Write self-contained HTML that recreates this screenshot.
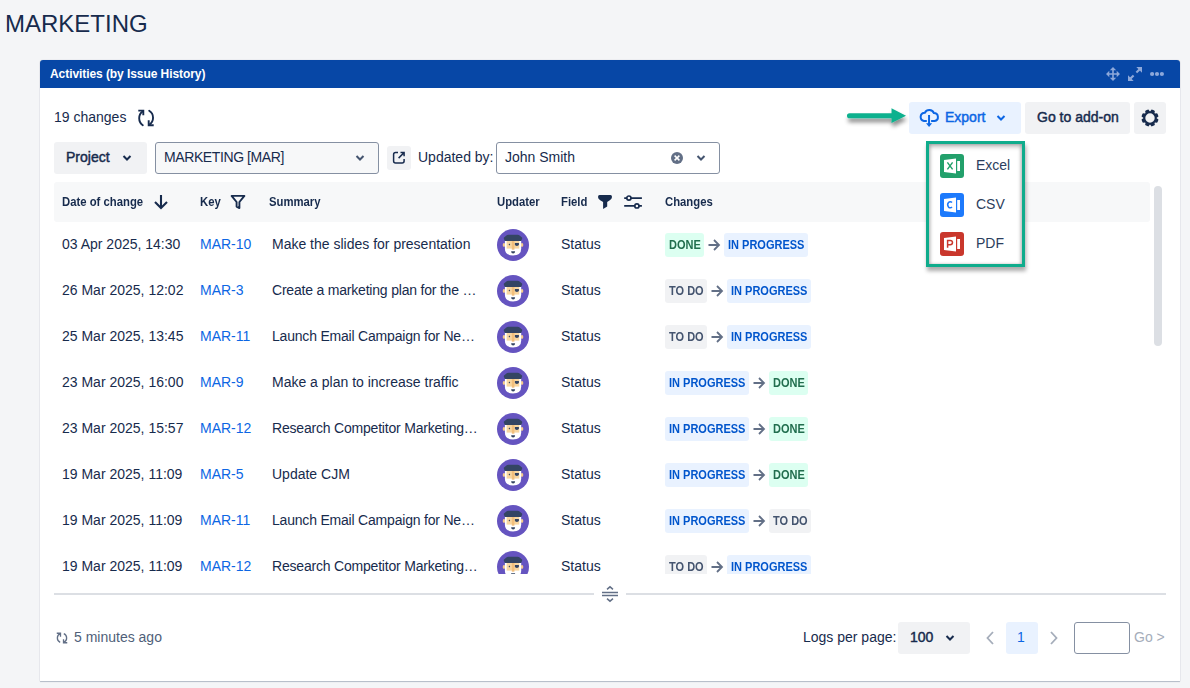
<!DOCTYPE html>
<html><head><meta charset="utf-8">
<style>
*{box-sizing:border-box;margin:0;padding:0}
html,body{width:1190px;height:688px;overflow:hidden;background:#F4F5F7;font-family:"Liberation Sans",sans-serif;color:#172B4D}
.a{position:absolute}
.t{position:absolute;white-space:nowrap;font-size:14px;line-height:16px}
.b{font-weight:bold}
.m{-webkit-text-stroke:0.45px currentColor}
.panel{position:absolute;left:40px;top:60px;width:1140px;height:621px;background:#fff;border-radius:3px 3px 0 0;box-shadow:0 1px 1px rgba(9,30,66,.25),0 0 1px rgba(9,30,66,.31)}
.hdr{position:absolute;left:40px;top:60px;width:1140px;height:28px;background:#0747A6;border-radius:3px 3px 0 0}
.btn{position:absolute;background:#F1F2F4;border-radius:3px}
.th{position:absolute;white-space:nowrap;font-size:12.5px;line-height:16px;top:194px;font-weight:bold;transform:scaleX(.905);transform-origin:0 0}
.bd{position:absolute;height:24px;border-radius:3px;font-size:12.5px;font-weight:bold;line-height:24px;white-space:nowrap;padding-left:4px}
.bd span{display:inline-block;transform:scaleX(.88);transform-origin:0 0}
.done{background:#DCFFF1;color:#216E4E}
.prog{background:#E9F2FF;color:#0055CC}
.todo{background:#F1F2F4;color:#44546F}
svg{position:absolute;overflow:visible}
</style></head><body>
<div class="t" style="left:5px;top:10px;font-size:24px;line-height:28px">MARKETING</div>
<div class="panel"></div><div class="hdr"></div>
<div class="t b" style="left:50px;top:66px;font-size:12px;color:#fff;letter-spacing:-0.07px">Activities (by Issue History)</div>
<svg style="left:1106px;top:67px" width="14" height="14" viewBox="0 0 14 14" fill="#8DA8DA"><path d="M7 1.5V12.5M1.5 7H12.5" stroke="#8DA8DA" stroke-width="1.6"/><path d="M3.8 3.3L7 0L10.2 3.3ZM3.8 10.7L7 14L10.2 10.7ZM3.3 3.8L0 7L3.3 10.2ZM10.7 3.8L14 7L10.7 10.2Z"/></svg>
<svg style="left:1128px;top:67px" width="14" height="14" viewBox="0 0 14 14" fill="#8DA8DA"><path d="M8.3 0H14V5.7ZM0 8.3V14H5.7Z"/><path d="M11.5 2.5L8.4 5.6M2.5 11.5L5.6 8.4" stroke="#8DA8DA" stroke-width="2.1"/></svg>
<svg style="left:1150px;top:72px" width="14" height="4" viewBox="0 0 14 4" fill="#8DA8DA"><circle cx="2.1" cy="2" r="2.1"/><circle cx="7" cy="2" r="2.1"/><circle cx="11.9" cy="2" r="2.1"/></svg>
<div class="t" style="left:54px;top:109px">19 changes</div>
<svg style="left:134px;top:106px" width="24" height="24" viewBox="0 0 24 24" fill="none" stroke="#172B4D" stroke-width="1.9"><path d="M4.3 4.6H9.3V9.3"/><path d="M8.8 5.3A8.5 8.5 0 0 0 8.8 19.2M15.2 4.8A8.2 8.2 0 0 1 15.2 18.7" stroke-linecap="round"/><path d="M14.7 14.3V19.3H19.7"/></svg>
<svg style="left:840px;top:100px" width="70" height="30" viewBox="0 0 70 30">
<defs><filter id="sh" x="-30%" y="-80%" width="160%" height="260%"><feDropShadow dx="1" dy="4" stdDeviation="2.2" flood-color="#000" flood-opacity=".45"/></filter></defs>
<g filter="url(#sh)"><path d="M9.5 13.2H51.5V8.2L66 15.7L51.5 23V18.3H9.5A2.55 2.55 0 0 1 9.5 13.2Z" fill="#0FB18E"/></g></svg>
<div class="btn" style="left:909px;top:102px;width:112px;height:32px;background:#E9F2FF"></div>
<svg style="left:914px;top:104px" width="30" height="28" viewBox="0 0 30 28" fill="none" stroke="#0C66E4" stroke-width="2"><path d="M12.8 17H9.9A4.2 4.2 0 0 1 10.86 8.71A5 5 0 0 1 19.91 9.06A4 4 0 0 1 20.6 17H17.1"/><path d="M15.05 11V20"/><path d="M12 19.3H18.1L15.05 23Z" fill="#0C66E4" stroke="none"/></svg>
<div class="t m" style="left:945px;top:109px;color:#0C66E4">Export</div>
<svg style="left:996px;top:114px" width="10" height="8" viewBox="0 0 10 8" fill="none" stroke="#0C66E4" stroke-width="2"><path d="M1.5 2L5 5.5L8.5 2"/></svg>
<div class="btn" style="left:1025px;top:102px;width:105px;height:32px"></div>
<div class="t m" style="left:1037px;top:109px">Go to add-on</div>
<div class="btn" style="left:1134px;top:102px;width:32px;height:32px"></div>
<svg style="left:1139.7px;top:107.5px" width="20" height="20" viewBox="0 0 20 20"><path fill="#172B4D" fill-rule="evenodd" d="M16.69 10.33L18.46 11.57A8.6 8.6 0 0 1 17.09 14.87L14.97 14.50A6.7 6.7 0 0 1 14.50 14.97L14.87 17.09A8.6 8.6 0 0 1 11.57 18.46L10.33 16.69A6.7 6.7 0 0 1 9.67 16.69L8.43 18.46A8.6 8.6 0 0 1 5.13 17.09L5.50 14.97A6.7 6.7 0 0 1 5.03 14.50L2.91 14.87A8.6 8.6 0 0 1 1.54 11.57L3.31 10.33A6.7 6.7 0 0 1 3.31 9.67L1.54 8.43A8.6 8.6 0 0 1 2.91 5.13L5.03 5.50A6.7 6.7 0 0 1 5.50 5.03L5.13 2.91A8.6 8.6 0 0 1 8.43 1.54L9.67 3.31A6.7 6.7 0 0 1 10.33 3.31L11.57 1.54A8.6 8.6 0 0 1 14.87 2.91L14.50 5.03A6.7 6.7 0 0 1 14.97 5.50L17.09 5.13A8.6 8.6 0 0 1 18.46 8.43L16.69 9.67A6.7 6.7 0 0 1 16.69 10.33ZM10 5.3A4.7 4.7 0 1 0 10 14.7A4.7 4.7 0 1 0 10 5.3Z"/></svg>
<div class="btn" style="left:54px;top:142px;width:93px;height:32px"></div>
<div class="t m" style="left:66px;top:149px">Project</div>
<svg style="left:122px;top:154px" width="10" height="8" viewBox="0 0 10 8" fill="none" stroke="#172B4D" stroke-width="2"><path d="M1.5 2L5 5.5L8.5 2"/></svg>
<div class="a" style="left:155px;top:142px;width:224px;height:32px;border:1px solid #8590A2;border-radius:3px;background:#F7F8F9"></div>
<div class="t" style="left:164px;top:149px;letter-spacing:-0.4px">MARKETING [MAR]</div>
<svg style="left:355px;top:154px" width="10" height="8" viewBox="0 0 10 8" fill="none" stroke="#44546F" stroke-width="2"><path d="M1.5 2L5 5.5L8.5 2"/></svg>
<div class="btn" style="left:387px;top:146px;width:24px;height:24px"></div>
<svg style="left:384px;top:143px" width="30" height="30" viewBox="0 0 30 30" fill="none" stroke="#172B4D" stroke-width="1.5"><path d="M14 9.6H11.6A2 2 0 0 0 9.6 11.6V18.1A2 2 0 0 0 11.6 20.1H18.1A2 2 0 0 0 20.1 18.1V16M16.5 9.6H20.1V13.2M19.9 9.8L14.6 15.1"/></svg>
<div class="t" style="left:418px;top:149px">Updated by:</div>
<div class="a" style="left:496px;top:142px;width:224px;height:32px;border:1px solid #8590A2;border-radius:3px;background:#fff"></div>
<div class="t" style="left:505px;top:149px">John Smith</div>
<svg style="left:671px;top:152px" width="12" height="12" viewBox="0 0 12 12"><circle cx="6" cy="6" r="6" fill="#626F86"/><path d="M3.6 3.6L8.4 8.4M8.4 3.6L3.6 8.4" stroke="#fff" stroke-width="1.5"/></svg>
<svg style="left:696px;top:154px" width="10" height="8" viewBox="0 0 10 8" fill="none" stroke="#44546F" stroke-width="2"><path d="M1.5 2L5 5.5L8.5 2"/></svg>
<div class="a" style="left:54px;top:182px;width:1096px;height:40px;background:#F7F8F9;border-radius:3px"></div>
<div class="th" style="left:62px">Date of change</div>
<div class="th" style="left:200px">Key</div>
<div class="th" style="left:269px">Summary</div>
<div class="th" style="left:497px">Updater</div>
<div class="th" style="left:561px">Field</div>
<div class="th" style="left:665px">Changes</div>
<svg style="left:154px;top:195px" width="14" height="14" viewBox="0 0 14 14" fill="none" stroke="#172B4D" stroke-width="2.1"><path d="M7 0V13M1 7L7 13L13 7"/></svg>
<svg style="left:230px;top:194px" width="16" height="16" viewBox="0 0 16 16" fill="none" stroke="#172B4D" stroke-width="1.9" stroke-linejoin="round"><path d="M1.6 1.9H14.4L9.4 8V14.1L6.6 12.6V8Z"/><path d="M7.6 8.6V12.2L8.4 12.6V8.6Z" fill="#8590A2" stroke="none"/></svg>
<svg style="left:598px;top:195px" width="14" height="14" viewBox="0 0 14 14"><path fill="#172B4D" d="M1.5 0H12.5Q14 0 14 2Q14 3.8 11.8 5.3L9.2 7.1V11.6L5.1 13.9V7.1L2.2 5.3Q0 3.8 0 2Q0 0 1.5 0Z"/></svg>
<svg style="left:623px;top:194px" width="20" height="16" viewBox="0 0 20 16" fill="none" stroke="#172B4D" stroke-width="1.7"><path d="M1.2 4.1H3.8M8 4.1H18.9M1.2 11.9H11.8M16 11.9H18.9"/><circle cx="5.9" cy="4.1" r="2.1"/><circle cx="13.9" cy="11.9" r="2.1"/></svg>
<div class="a" style="left:54px;top:222px;width:1096px;height:352px;overflow:hidden">
<div class="t" style="left:8px;top:14px">03 Apr 2025, 14:30</div>
<div class="t" style="left:146px;top:14px;color:#0C66E4">MAR-10</div>
<div class="t" style="left:218px;top:14px">Make the slides for presentation</div>
<svg style="left:443px;top:7px" width="32" height="32" viewBox="0 0 32 32">
<circle cx="16" cy="16" r="16" fill="#6554C0"/>
<ellipse cx="7" cy="15.9" rx="1.3" ry="1.9" fill="#F5C98A"/><ellipse cx="25" cy="15.9" rx="1.3" ry="1.9" fill="#F5C98A"/>
<path d="M7.9 11.5H24.2V19.5Q24.2 26.4 16 26.4Q7.9 26.4 7.9 19.5Z" fill="#fff"/>
<path d="M9.6 11.5H22.3V19.6H9.6Z" fill="#F8D6A0"/>
<path d="M14.8 11.5H17.4V20.7H14.8Z" fill="#F2BF7D"/>
<path d="M11.7 5.8H20.3Q22 5.8 23.5 7.2L25 8.6Q25.5 9.3 24.8 10.5L24.2 11.9H7.8L7.2 10.5Q6.5 9.3 7 8.6L8.5 7.2Q10 5.8 11.7 5.8Z" fill="#344563"/>
<path d="M12.4 14.6L13.2 15.5L12.4 16.4L11.6 15.5Z" fill="#344563"/>
<path d="M17.9 14H21.9V15.2A2 1.7 0 0 1 17.9 15.2Z" fill="#344563"/>
<path d="M14.1 22.3H18.1Q18.1 24.5 16.1 24.5Q14.1 24.5 14.1 22.3Z" fill="#344563"/>
</svg>
<div class="t" style="left:507px;top:14px">Status</div>
<div class="bd done" style="left:611px;top:11px;width:39px"><span>DONE</span></div>
<svg style="left:654px;top:17px" width="12" height="12" viewBox="0 0 12 12" fill="none" stroke="#626F86" stroke-width="1.8"><path d="M0.5 6H11M6 1L11 6L6 11"/></svg>
<div class="bd prog" style="left:670px;top:11px;width:84px"><span>IN PROGRESS</span></div>
<div class="t" style="left:8px;top:60px">26 Mar 2025, 12:02</div>
<div class="t" style="left:146px;top:60px;color:#0C66E4">MAR-3</div>
<div class="t" style="left:218px;top:60px;letter-spacing:-0.2px">Create a marketing plan for the …</div>
<svg style="left:443px;top:53px" width="32" height="32" viewBox="0 0 32 32">
<circle cx="16" cy="16" r="16" fill="#6554C0"/>
<ellipse cx="7" cy="15.9" rx="1.3" ry="1.9" fill="#F5C98A"/><ellipse cx="25" cy="15.9" rx="1.3" ry="1.9" fill="#F5C98A"/>
<path d="M7.9 11.5H24.2V19.5Q24.2 26.4 16 26.4Q7.9 26.4 7.9 19.5Z" fill="#fff"/>
<path d="M9.6 11.5H22.3V19.6H9.6Z" fill="#F8D6A0"/>
<path d="M14.8 11.5H17.4V20.7H14.8Z" fill="#F2BF7D"/>
<path d="M11.7 5.8H20.3Q22 5.8 23.5 7.2L25 8.6Q25.5 9.3 24.8 10.5L24.2 11.9H7.8L7.2 10.5Q6.5 9.3 7 8.6L8.5 7.2Q10 5.8 11.7 5.8Z" fill="#344563"/>
<path d="M12.4 14.6L13.2 15.5L12.4 16.4L11.6 15.5Z" fill="#344563"/>
<path d="M17.9 14H21.9V15.2A2 1.7 0 0 1 17.9 15.2Z" fill="#344563"/>
<path d="M14.1 22.3H18.1Q18.1 24.5 16.1 24.5Q14.1 24.5 14.1 22.3Z" fill="#344563"/>
</svg>
<div class="t" style="left:507px;top:60px">Status</div>
<div class="bd todo" style="left:611px;top:57px;width:42px"><span>TO DO</span></div>
<svg style="left:657px;top:63px" width="12" height="12" viewBox="0 0 12 12" fill="none" stroke="#626F86" stroke-width="1.8"><path d="M0.5 6H11M6 1L11 6L6 11"/></svg>
<div class="bd prog" style="left:673px;top:57px;width:84px"><span>IN PROGRESS</span></div>
<div class="t" style="left:8px;top:106px">25 Mar 2025, 13:45</div>
<div class="t" style="left:146px;top:106px;color:#0C66E4">MAR-11</div>
<div class="t" style="left:218px;top:106px;letter-spacing:-0.2px">Launch Email Campaign for Ne…</div>
<svg style="left:443px;top:99px" width="32" height="32" viewBox="0 0 32 32">
<circle cx="16" cy="16" r="16" fill="#6554C0"/>
<ellipse cx="7" cy="15.9" rx="1.3" ry="1.9" fill="#F5C98A"/><ellipse cx="25" cy="15.9" rx="1.3" ry="1.9" fill="#F5C98A"/>
<path d="M7.9 11.5H24.2V19.5Q24.2 26.4 16 26.4Q7.9 26.4 7.9 19.5Z" fill="#fff"/>
<path d="M9.6 11.5H22.3V19.6H9.6Z" fill="#F8D6A0"/>
<path d="M14.8 11.5H17.4V20.7H14.8Z" fill="#F2BF7D"/>
<path d="M11.7 5.8H20.3Q22 5.8 23.5 7.2L25 8.6Q25.5 9.3 24.8 10.5L24.2 11.9H7.8L7.2 10.5Q6.5 9.3 7 8.6L8.5 7.2Q10 5.8 11.7 5.8Z" fill="#344563"/>
<path d="M12.4 14.6L13.2 15.5L12.4 16.4L11.6 15.5Z" fill="#344563"/>
<path d="M17.9 14H21.9V15.2A2 1.7 0 0 1 17.9 15.2Z" fill="#344563"/>
<path d="M14.1 22.3H18.1Q18.1 24.5 16.1 24.5Q14.1 24.5 14.1 22.3Z" fill="#344563"/>
</svg>
<div class="t" style="left:507px;top:106px">Status</div>
<div class="bd todo" style="left:611px;top:103px;width:42px"><span>TO DO</span></div>
<svg style="left:657px;top:109px" width="12" height="12" viewBox="0 0 12 12" fill="none" stroke="#626F86" stroke-width="1.8"><path d="M0.5 6H11M6 1L11 6L6 11"/></svg>
<div class="bd prog" style="left:673px;top:103px;width:84px"><span>IN PROGRESS</span></div>
<div class="t" style="left:8px;top:152px">23 Mar 2025, 16:00</div>
<div class="t" style="left:146px;top:152px;color:#0C66E4">MAR-9</div>
<div class="t" style="left:218px;top:152px">Make a plan to increase traffic</div>
<svg style="left:443px;top:145px" width="32" height="32" viewBox="0 0 32 32">
<circle cx="16" cy="16" r="16" fill="#6554C0"/>
<ellipse cx="7" cy="15.9" rx="1.3" ry="1.9" fill="#F5C98A"/><ellipse cx="25" cy="15.9" rx="1.3" ry="1.9" fill="#F5C98A"/>
<path d="M7.9 11.5H24.2V19.5Q24.2 26.4 16 26.4Q7.9 26.4 7.9 19.5Z" fill="#fff"/>
<path d="M9.6 11.5H22.3V19.6H9.6Z" fill="#F8D6A0"/>
<path d="M14.8 11.5H17.4V20.7H14.8Z" fill="#F2BF7D"/>
<path d="M11.7 5.8H20.3Q22 5.8 23.5 7.2L25 8.6Q25.5 9.3 24.8 10.5L24.2 11.9H7.8L7.2 10.5Q6.5 9.3 7 8.6L8.5 7.2Q10 5.8 11.7 5.8Z" fill="#344563"/>
<path d="M12.4 14.6L13.2 15.5L12.4 16.4L11.6 15.5Z" fill="#344563"/>
<path d="M17.9 14H21.9V15.2A2 1.7 0 0 1 17.9 15.2Z" fill="#344563"/>
<path d="M14.1 22.3H18.1Q18.1 24.5 16.1 24.5Q14.1 24.5 14.1 22.3Z" fill="#344563"/>
</svg>
<div class="t" style="left:507px;top:152px">Status</div>
<div class="bd prog" style="left:611px;top:149px;width:84px"><span>IN PROGRESS</span></div>
<svg style="left:699px;top:155px" width="12" height="12" viewBox="0 0 12 12" fill="none" stroke="#626F86" stroke-width="1.8"><path d="M0.5 6H11M6 1L11 6L6 11"/></svg>
<div class="bd done" style="left:715px;top:149px;width:39px"><span>DONE</span></div>
<div class="t" style="left:8px;top:198px">23 Mar 2025, 15:57</div>
<div class="t" style="left:146px;top:198px;color:#0C66E4">MAR-12</div>
<div class="t" style="left:218px;top:198px;letter-spacing:-0.2px">Research Competitor Marketing…</div>
<svg style="left:443px;top:191px" width="32" height="32" viewBox="0 0 32 32">
<circle cx="16" cy="16" r="16" fill="#6554C0"/>
<ellipse cx="7" cy="15.9" rx="1.3" ry="1.9" fill="#F5C98A"/><ellipse cx="25" cy="15.9" rx="1.3" ry="1.9" fill="#F5C98A"/>
<path d="M7.9 11.5H24.2V19.5Q24.2 26.4 16 26.4Q7.9 26.4 7.9 19.5Z" fill="#fff"/>
<path d="M9.6 11.5H22.3V19.6H9.6Z" fill="#F8D6A0"/>
<path d="M14.8 11.5H17.4V20.7H14.8Z" fill="#F2BF7D"/>
<path d="M11.7 5.8H20.3Q22 5.8 23.5 7.2L25 8.6Q25.5 9.3 24.8 10.5L24.2 11.9H7.8L7.2 10.5Q6.5 9.3 7 8.6L8.5 7.2Q10 5.8 11.7 5.8Z" fill="#344563"/>
<path d="M12.4 14.6L13.2 15.5L12.4 16.4L11.6 15.5Z" fill="#344563"/>
<path d="M17.9 14H21.9V15.2A2 1.7 0 0 1 17.9 15.2Z" fill="#344563"/>
<path d="M14.1 22.3H18.1Q18.1 24.5 16.1 24.5Q14.1 24.5 14.1 22.3Z" fill="#344563"/>
</svg>
<div class="t" style="left:507px;top:198px">Status</div>
<div class="bd prog" style="left:611px;top:195px;width:84px"><span>IN PROGRESS</span></div>
<svg style="left:699px;top:201px" width="12" height="12" viewBox="0 0 12 12" fill="none" stroke="#626F86" stroke-width="1.8"><path d="M0.5 6H11M6 1L11 6L6 11"/></svg>
<div class="bd done" style="left:715px;top:195px;width:39px"><span>DONE</span></div>
<div class="t" style="left:8px;top:244px">19 Mar 2025, 11:09</div>
<div class="t" style="left:146px;top:244px;color:#0C66E4">MAR-5</div>
<div class="t" style="left:218px;top:244px">Update CJM</div>
<svg style="left:443px;top:237px" width="32" height="32" viewBox="0 0 32 32">
<circle cx="16" cy="16" r="16" fill="#6554C0"/>
<ellipse cx="7" cy="15.9" rx="1.3" ry="1.9" fill="#F5C98A"/><ellipse cx="25" cy="15.9" rx="1.3" ry="1.9" fill="#F5C98A"/>
<path d="M7.9 11.5H24.2V19.5Q24.2 26.4 16 26.4Q7.9 26.4 7.9 19.5Z" fill="#fff"/>
<path d="M9.6 11.5H22.3V19.6H9.6Z" fill="#F8D6A0"/>
<path d="M14.8 11.5H17.4V20.7H14.8Z" fill="#F2BF7D"/>
<path d="M11.7 5.8H20.3Q22 5.8 23.5 7.2L25 8.6Q25.5 9.3 24.8 10.5L24.2 11.9H7.8L7.2 10.5Q6.5 9.3 7 8.6L8.5 7.2Q10 5.8 11.7 5.8Z" fill="#344563"/>
<path d="M12.4 14.6L13.2 15.5L12.4 16.4L11.6 15.5Z" fill="#344563"/>
<path d="M17.9 14H21.9V15.2A2 1.7 0 0 1 17.9 15.2Z" fill="#344563"/>
<path d="M14.1 22.3H18.1Q18.1 24.5 16.1 24.5Q14.1 24.5 14.1 22.3Z" fill="#344563"/>
</svg>
<div class="t" style="left:507px;top:244px">Status</div>
<div class="bd prog" style="left:611px;top:241px;width:84px"><span>IN PROGRESS</span></div>
<svg style="left:699px;top:247px" width="12" height="12" viewBox="0 0 12 12" fill="none" stroke="#626F86" stroke-width="1.8"><path d="M0.5 6H11M6 1L11 6L6 11"/></svg>
<div class="bd done" style="left:715px;top:241px;width:39px"><span>DONE</span></div>
<div class="t" style="left:8px;top:290px">19 Mar 2025, 11:09</div>
<div class="t" style="left:146px;top:290px;color:#0C66E4">MAR-11</div>
<div class="t" style="left:218px;top:290px;letter-spacing:-0.2px">Launch Email Campaign for Ne…</div>
<svg style="left:443px;top:283px" width="32" height="32" viewBox="0 0 32 32">
<circle cx="16" cy="16" r="16" fill="#6554C0"/>
<ellipse cx="7" cy="15.9" rx="1.3" ry="1.9" fill="#F5C98A"/><ellipse cx="25" cy="15.9" rx="1.3" ry="1.9" fill="#F5C98A"/>
<path d="M7.9 11.5H24.2V19.5Q24.2 26.4 16 26.4Q7.9 26.4 7.9 19.5Z" fill="#fff"/>
<path d="M9.6 11.5H22.3V19.6H9.6Z" fill="#F8D6A0"/>
<path d="M14.8 11.5H17.4V20.7H14.8Z" fill="#F2BF7D"/>
<path d="M11.7 5.8H20.3Q22 5.8 23.5 7.2L25 8.6Q25.5 9.3 24.8 10.5L24.2 11.9H7.8L7.2 10.5Q6.5 9.3 7 8.6L8.5 7.2Q10 5.8 11.7 5.8Z" fill="#344563"/>
<path d="M12.4 14.6L13.2 15.5L12.4 16.4L11.6 15.5Z" fill="#344563"/>
<path d="M17.9 14H21.9V15.2A2 1.7 0 0 1 17.9 15.2Z" fill="#344563"/>
<path d="M14.1 22.3H18.1Q18.1 24.5 16.1 24.5Q14.1 24.5 14.1 22.3Z" fill="#344563"/>
</svg>
<div class="t" style="left:507px;top:290px">Status</div>
<div class="bd prog" style="left:611px;top:287px;width:84px"><span>IN PROGRESS</span></div>
<svg style="left:699px;top:293px" width="12" height="12" viewBox="0 0 12 12" fill="none" stroke="#626F86" stroke-width="1.8"><path d="M0.5 6H11M6 1L11 6L6 11"/></svg>
<div class="bd todo" style="left:715px;top:287px;width:42px"><span>TO DO</span></div>
<div class="t" style="left:8px;top:336px">19 Mar 2025, 11:09</div>
<div class="t" style="left:146px;top:336px;color:#0C66E4">MAR-12</div>
<div class="t" style="left:218px;top:336px;letter-spacing:-0.2px">Research Competitor Marketing…</div>
<svg style="left:443px;top:329px" width="32" height="32" viewBox="0 0 32 32">
<circle cx="16" cy="16" r="16" fill="#6554C0"/>
<ellipse cx="7" cy="15.9" rx="1.3" ry="1.9" fill="#F5C98A"/><ellipse cx="25" cy="15.9" rx="1.3" ry="1.9" fill="#F5C98A"/>
<path d="M7.9 11.5H24.2V19.5Q24.2 26.4 16 26.4Q7.9 26.4 7.9 19.5Z" fill="#fff"/>
<path d="M9.6 11.5H22.3V19.6H9.6Z" fill="#F8D6A0"/>
<path d="M14.8 11.5H17.4V20.7H14.8Z" fill="#F2BF7D"/>
<path d="M11.7 5.8H20.3Q22 5.8 23.5 7.2L25 8.6Q25.5 9.3 24.8 10.5L24.2 11.9H7.8L7.2 10.5Q6.5 9.3 7 8.6L8.5 7.2Q10 5.8 11.7 5.8Z" fill="#344563"/>
<path d="M12.4 14.6L13.2 15.5L12.4 16.4L11.6 15.5Z" fill="#344563"/>
<path d="M17.9 14H21.9V15.2A2 1.7 0 0 1 17.9 15.2Z" fill="#344563"/>
<path d="M14.1 22.3H18.1Q18.1 24.5 16.1 24.5Q14.1 24.5 14.1 22.3Z" fill="#344563"/>
</svg>
<div class="t" style="left:507px;top:336px">Status</div>
<div class="bd todo" style="left:611px;top:333px;width:42px"><span>TO DO</span></div>
<svg style="left:657px;top:339px" width="12" height="12" viewBox="0 0 12 12" fill="none" stroke="#626F86" stroke-width="1.8"><path d="M0.5 6H11M6 1L11 6L6 11"/></svg>
<div class="bd prog" style="left:673px;top:333px;width:84px"><span>IN PROGRESS</span></div>
</div>
<div class="a" style="left:1154px;top:186px;width:8px;height:160px;border-radius:4px;background:#DCDFE4"></div>
<div class="a" style="left:54px;top:593px;width:540px;height:2px;background:#DCDFE4"></div>
<div class="a" style="left:626px;top:593px;width:540px;height:2px;background:#DCDFE4"></div>
<svg style="left:602px;top:586px" width="16" height="16" viewBox="0 0 16 16" fill="none" stroke="#626F86" stroke-width="1.4"><path d="M0 6.5H16M0 9.5H16"/><path d="M5 3.3L8 0.8L11 3.3M5 12.7L8 15.2L11 12.7" stroke-width="1.5"/></svg>
<svg style="left:56px;top:632px" width="12" height="12" viewBox="0 0 24 24" fill="none" stroke="#626F86" stroke-width="2.6"><path d="M1.5 2.5H9V9.5M8.4 3.3A9.5 9.5 0 0 0 8.4 20.7M15.6 3.3A9.5 9.5 0 0 1 15.6 20.7M15 14.5V21.5H22.5"/></svg>
<div class="t" style="left:74px;top:629px;color:#505F79">5 minutes ago</div>
<div class="t" style="left:803px;top:629px">Logs per page:</div>
<div class="btn" style="left:898px;top:622px;width:72px;height:32px"></div>
<div class="t m" style="left:910px;top:629px">100</div>
<svg style="left:945px;top:634px" width="10" height="8" viewBox="0 0 10 8" fill="none" stroke="#172B4D" stroke-width="2"><path d="M1.5 2L5 5.5L8.5 2"/></svg>
<svg style="left:986px;top:631px" width="8" height="14" viewBox="0 0 8 14" fill="none" stroke="#A5ADBA" stroke-width="1.8"><path d="M7 1L1.5 7L7 13"/></svg>
<div class="btn" style="left:1006px;top:622px;width:32px;height:32px;background:#E9F2FF"></div>
<div class="t" style="left:1017px;top:629px;color:#0C66E4">1</div>
<svg style="left:1050px;top:631px" width="8" height="14" viewBox="0 0 8 14" fill="none" stroke="#A5ADBA" stroke-width="1.8"><path d="M1 1L6.5 7L1 13"/></svg>
<div class="a" style="left:1074px;top:622px;width:56px;height:32px;border:1px solid #8590A2;border-radius:3px;background:#fff"></div>
<div class="t" style="left:1134px;top:629px;color:#A5ADBA">Go &gt;</div>
<div class="a" style="left:926px;top:141px;width:99px;height:126px;background:#fff;border:3px solid #0FAC8C;box-shadow:1px 4px 4px rgba(0,0,0,.33),inset 0 3px 4px rgba(0,0,0,.25),inset 2px 0 3px rgba(0,0,0,.12),inset -2px 0 3px rgba(0,0,0,.12)"></div>
<svg style="left:940px;top:154px" width="24" height="24" viewBox="0 0 24 24"><rect width="24" height="24" rx="3" fill="#22A06B"/><path d="M4 6L16 4.4V19.6L4 18Z" fill="#fff"/><rect x="17.2" y="7" width="2.8" height="10" fill="#fff"/><path d="M7.4 8.4L12.6 15.4M12.6 8.4L7.4 15.4" stroke="#22A06B" stroke-width="1.45" fill="none"/></svg>
<svg style="left:940px;top:193px" width="24" height="24" viewBox="0 0 24 24"><rect width="24" height="24" rx="3" fill="#1D7AFC"/><path d="M4 6L16 4.4V19.6L4 18Z" fill="#fff"/><rect x="17.2" y="7" width="2.8" height="10" fill="#fff"/><path d="M12 9.5A2.5 3.1 0 1 0 12 14" stroke="#1D7AFC" stroke-width="1.5" fill="none"/></svg>
<svg style="left:940px;top:232px" width="24" height="24" viewBox="0 0 24 24"><rect width="24" height="24" rx="3" fill="#C9372C"/><path d="M4 6L16 4.4V19.6L4 18Z" fill="#fff"/><rect x="17.2" y="7" width="2.8" height="10" fill="#fff"/><path d="M7.6 15.8V8.4H10.2A2.3 2.15 0 0 1 10.2 12.7H7.6" stroke="#C9372C" stroke-width="1.5" fill="none"/></svg>
<div class="t" style="left:976px;top:157px;color:#2C3E5D">Excel</div>
<div class="t" style="left:976px;top:196px;color:#2C3E5D">CSV</div>
<div class="t" style="left:976px;top:235px;color:#2C3E5D">PDF</div>
</body></html>
